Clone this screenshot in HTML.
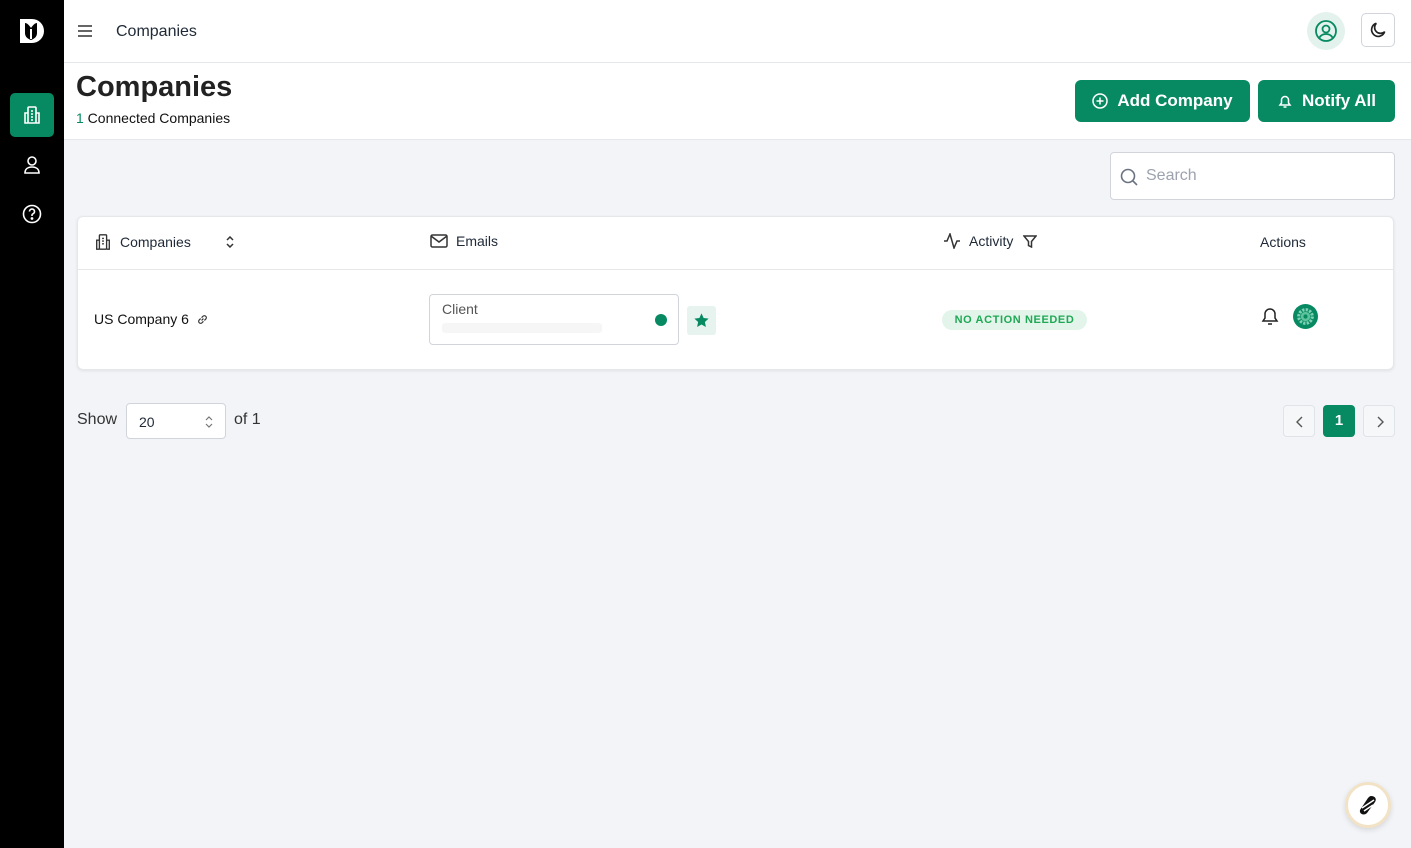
<!DOCTYPE html>
<html><head><meta charset="utf-8"><style>
*{box-sizing:border-box;margin:0;padding:0}
body{width:1411px;height:848px;overflow:hidden;font-family:"Liberation Sans",sans-serif;background:#f2f4f8;color:#1f2937;position:relative}
.side{position:absolute;left:0;top:0;width:64px;height:848px;background:#000}
.top{position:absolute;left:64px;top:0;right:0;height:63px;background:#fff;border-bottom:1px solid #e5e7eb}
.head{position:absolute;left:64px;top:63px;right:0;height:77px;background:#fff;border-bottom:1px solid #e5e7eb}
.btn{position:absolute;top:80px;height:42px;background:#078a62;color:#fff;border-radius:6px;font-size:17px;font-weight:bold;display:flex;align-items:center;justify-content:center;gap:9px}
svg{display:block}
.card{position:absolute;left:77px;top:216px;width:1317px;height:154px;background:#fff;border:1px solid #e5e7eb;border-radius:6px;box-shadow:0 1px 3px rgba(0,0,0,.08)}
.th{position:absolute;top:16px;font-size:14px;display:flex;align-items:center;gap:8px;color:#1f2937}
</style></head><body>
<div class="side">
 <svg style="position:absolute;left:18px;top:17px" width="28" height="28" viewBox="0 0 28 28"><path d="M2 2h12a12 12 0 0 1 0 24H2z" fill="#fff"/><path d="M7 6v10c0 4 3 6 6 7 3-1 6-3 6-7V6c-2 0-4 2-6 5-2-3-4-5-6-5z" fill="#000"/><path d="M13 12v10" stroke="#fff" stroke-width="2"/></svg>
 <div style="position:absolute;left:10px;top:93px;width:44px;height:44px;background:#078a62;border-radius:5px"></div>
 <svg style="position:absolute;left:22px;top:105px" width="20" height="20" viewBox="0 0 20 20" fill="none" stroke="#fff" stroke-width="1.6"><rect x="6" y="2" width="8" height="16" rx="1"/><path d="M6 8H3v10h3M14 8h3v10h-3M9 6h2M9 9h2M9 12h2M9 15h2"/></svg>
 <svg style="position:absolute;left:23px;top:155px" width="18" height="20" viewBox="0 0 18 20" fill="none" stroke="#fff" stroke-width="1.6"><circle cx="9" cy="6" r="4"/><path d="M2 18c0-4 3-6 7-6s7 2 7 6z"/></svg>
 <svg style="position:absolute;left:22px;top:204px" width="20" height="20" viewBox="0 0 20 20" fill="none" stroke="#fff" stroke-width="1.6"><circle cx="10" cy="10" r="8.5"/><path d="M7.5 7.5a2.5 2.5 0 1 1 3.5 2.3c-.7.3-1 .8-1 1.5v.7"/><circle cx="10" cy="14.5" r=".6" fill="#fff"/></svg>
</div>
<div class="top">
 <svg style="position:absolute;left:14px;top:25px" width="14" height="12" viewBox="0 0 14 12" stroke="#333" stroke-width="1.6"><path d="M0 1h14M0 6h14M0 11h14"/></svg>
 <div style="position:absolute;left:52px;top:23px;font-size:16px;color:#1f2937">Companies</div>
 <div style="position:absolute;left:1243px;top:12px;width:38px;height:38px;border-radius:50%;background:#e3f2ec"></div>
 <svg style="position:absolute;left:1250px;top:19px" width="24" height="24" viewBox="0 0 24 24" fill="none" stroke="#078a62" stroke-width="1.8"><circle cx="12" cy="12" r="10"/><circle cx="12" cy="10" r="3.5"/><path d="M5.5 18.5c1.5-2.5 4-3.5 6.5-3.5s5 1 6.5 3.5"/></svg>
 <div style="position:absolute;left:1297px;top:13px;width:34px;height:34px;border:1px solid #d1d5db;border-radius:5px;background:#fff"></div>
 <svg style="position:absolute;left:1304px;top:20px" width="20" height="20" viewBox="0 0 24 24" fill="none" stroke="#222" stroke-width="2"><path d="M20 14A8 8 0 1 1 10 4a6.5 6.5 0 0 0 10 10z"/></svg>
</div>
<div class="head">
 <div style="position:absolute;left:12px;top:8px;font-size:29px;font-weight:bold;color:#222">Companies</div>
 <div style="position:absolute;left:12px;top:47px;font-size:14px;color:#111"><span style="color:#078a62">1</span> Connected Companies</div>
</div>
<div class="btn" style="left:1075px;width:175px"><svg width="16" height="16" viewBox="0 0 16 16" fill="none" stroke="#fff" stroke-width="1.5"><circle cx="8" cy="8" r="7"/><path d="M8 4.5v7M4.5 8h7"/></svg>Add Company</div>
<div class="btn" style="left:1258px;width:137px"><svg width="16" height="16" viewBox="0 0 16 16" fill="none" stroke="#fff" stroke-width="1.5"><path d="M3 12h10l-1.5-2V7a3.5 3.5 0 0 0-7 0v3z M6.5 14h3"/></svg>Notify All</div>
<div style="position:absolute;left:1110px;top:152px;width:285px;height:48px;background:#fff;border:1px solid #d1d5db;border-radius:4px">
 <svg style="position:absolute;left:9px;top:15px" width="18" height="18" viewBox="0 0 18 18" fill="none" stroke="#6b7280" stroke-width="1.6"><circle cx="8" cy="8" r="6.5"/><path d="M13 13l4 4"/></svg>
 <div style="position:absolute;left:35px;top:14px;font-size:16px;color:#9ca3af">Search</div>
</div>
<div class="card">
 <div class="th" style="left:16px"><svg width="18" height="18" viewBox="0 0 20 20" fill="none" stroke="#333" stroke-width="1.5"><rect x="6" y="2" width="8" height="16" rx="1"/><path d="M6 8H3v10h3M14 8h3v10h-3M9 6h2M9 9h2M9 12h2"/></svg>Companies<svg style="margin-left:26px" width="10" height="12" viewBox="0 0 10 12" fill="none" stroke="#333" stroke-width="1.5"><path d="M2 4l3-3 3 3M2 8l3 3 3-3"/></svg></div>
 <div class="th" style="left:352px"><svg width="18" height="14" viewBox="0 0 18 14" fill="none" stroke="#333" stroke-width="1.5"><rect x="1" y="1" width="16" height="12" rx="1.5"/><path d="M1 2l8 6 8-6"/></svg>Emails</div>
 <div class="th" style="left:865px"><svg width="18" height="16" viewBox="0 0 18 16" fill="none" stroke="#333" stroke-width="1.5"><path d="M1 8h3l3-7 4 14 3-7h3"/></svg>Activity<svg style="margin-left:2px" width="14" height="13" viewBox="0 0 14 13" fill="none" stroke="#333" stroke-width="1.5"><path d="M1 1h12L8.5 6.5V12L5.5 10.5V6.5z"/></svg></div>
 <div class="th" style="left:1182px;top:17px">Actions</div>
 <div style="position:absolute;left:0;right:0;top:52px;border-top:1px solid #e5e7eb"></div>
 <div style="position:absolute;left:16px;top:94px;font-size:14px;color:#111;display:flex;align-items:center;gap:7px">US Company 6 <svg width="13" height="13" viewBox="0 0 14 14" fill="none" stroke="#333" stroke-width="1.3"><path d="M6 8l2-2M5 6L3.5 7.5a2 2 0 0 0 3 3L8 9M9 8l1.5-1.5a2 2 0 0 0-3-3L6 5"/></svg></div>
 <div style="position:absolute;left:351px;top:77px;width:250px;height:51px;border:1px solid #d1d5db;border-radius:4px">
  <div style="position:absolute;left:12px;top:6px;font-size:14px;color:#555">Client</div>
  <div style="position:absolute;left:12px;top:28px;width:160px;height:10px;background:#f6f6f6;border-radius:3px"></div>
  <div style="position:absolute;left:225px;top:19px;width:12px;height:12px;border-radius:50%;background:#078a62"></div>
 </div>
 <div style="position:absolute;left:609px;top:89px;width:29px;height:29px;background:#e6f3ee;border-radius:3px"><svg style="margin:6px" width="17" height="17" viewBox="0 0 24 24"><path d="M12 2l3 6.5 7 .8-5.2 4.8 1.4 7L12 17.6 5.8 21.1l1.4-7L2 9.3l7-.8z" fill="#078a62"/></svg></div>
 <div style="position:absolute;left:864px;top:93px;width:145px;height:20px;background:#e3f5ea;border-radius:10px;color:#1fa855;font-size:11px;font-weight:bold;letter-spacing:.6px;text-align:center;line-height:20px">NO ACTION NEEDED</div>
 <svg style="position:absolute;left:1183px;top:89px" width="18" height="20" viewBox="0 0 18 20" fill="none" stroke="#222" stroke-width="1.5"><path d="M2 15h14l-2-3V8a5 5 0 0 0-10 0v4z M7 18h4"/></svg>
 <svg style="position:absolute;left:1215px;top:87px" width="25" height="25" viewBox="0 0 24 24"><circle cx="12" cy="12" r="12" fill="#078a62"/><circle cx="12" cy="12" r="6.5" fill="none" stroke="#7fd1b3" stroke-width="3" stroke-dasharray="2.2 1.2"/><circle cx="12" cy="12" r="4.5" fill="#5cc39c"/><circle cx="12" cy="12" r="2" fill="#078a62"/></svg>
</div>
<div style="position:absolute;left:77px;top:411px;font-size:16px;color:#333">Show</div>
<div style="position:absolute;left:126px;top:403px;width:100px;height:36px;background:#fff;border:1px solid #d1d5db;border-radius:4px;font-size:14px;padding:10px 12px">20<svg style="position:absolute;right:12px;top:12px" width="8" height="12" viewBox="0 0 8 12" fill="none" stroke="#777" stroke-width="1.2"><path d="M1 4l3-3 3 3M1 8l3 3 3-3"/></svg></div>
<div style="position:absolute;left:234px;top:411px;font-size:16px;color:#333">of 1</div>
<div style="position:absolute;left:1283px;top:405px;width:32px;height:32px;border:1px solid #e0e3e8;border-radius:4px;background:#f6f7f9"><svg style="margin:10px 12px" width="8" height="12" viewBox="0 0 8 12" fill="none" stroke="#555" stroke-width="1.4"><path d="M6 1L1 6l5 5"/></svg></div>
<div style="position:absolute;left:1323px;top:405px;width:32px;height:32px;border-radius:4px;background:#078a62;color:#fff;font-weight:bold;font-size:15px;text-align:center;line-height:32px">1</div>
<div style="position:absolute;left:1363px;top:405px;width:32px;height:32px;border:1px solid #e0e3e8;border-radius:4px;background:#f6f7f9"><svg style="margin:10px 12px" width="8" height="12" viewBox="0 0 8 12" fill="none" stroke="#555" stroke-width="1.4"><path d="M2 1l5 5-5 5"/></svg></div>
<div style="position:absolute;left:1345px;top:782px;width:46px;height:46px;border-radius:50%;background:#fff;border:3px solid #f3e3c6;box-shadow:0 2px 6px rgba(0,0,0,.12)"><svg style="margin:9px" width="22" height="22" viewBox="0 0 22 22"><path d="M14 2c4 0 6 3 4 6l-8 11c-3 3-8 1-7-3l8-12c1-1 2-2 3-2z" fill="#111"/><path d="M5 14L17 6M7 17l9-6" stroke="#fff" stroke-width="1.5"/></svg></div>
</body></html>
